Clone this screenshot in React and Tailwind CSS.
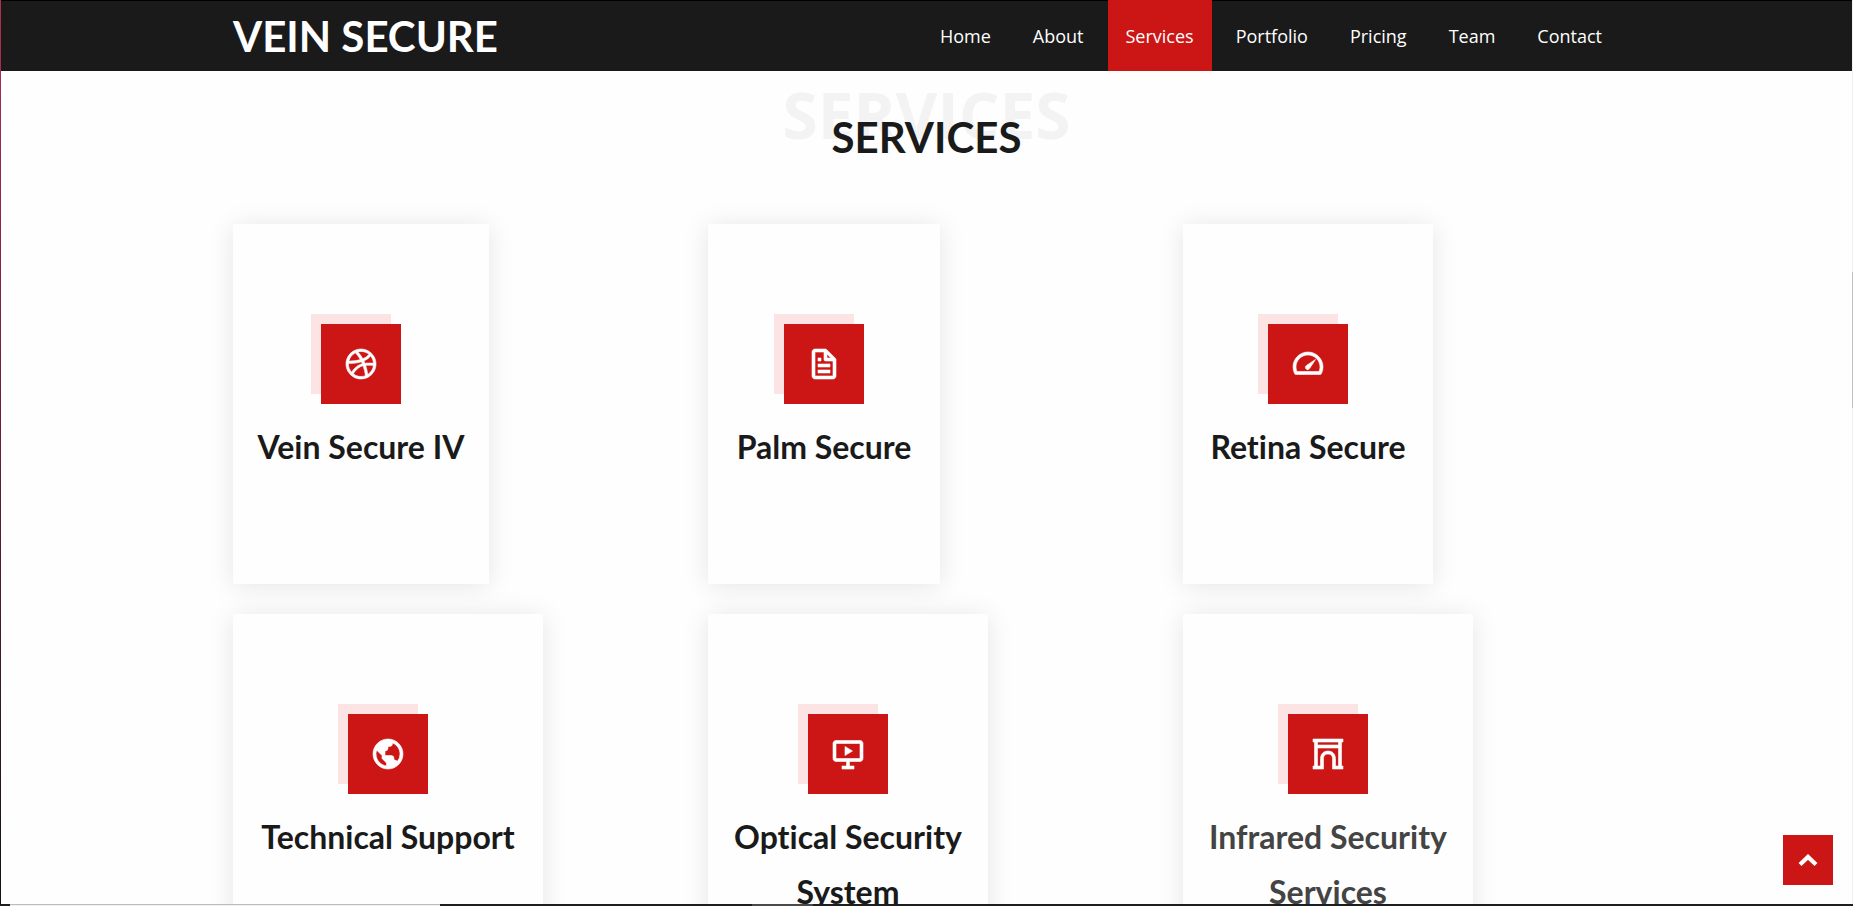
import {
  BiLogoDribbble,
  BiFile,
  BiTachometer,
  BiWorld,
  BiSlideshow,
  BiArch,
} from "react-icons/bi";

const links = ["Home", "About", "Services", "Portfolio", "Pricing", "Team", "Contact"];

const services = [
  { title: "Vein Secure IV", icon: BiLogoDribbble, width: "w-[256px]", color: "text-[#1a1a1a]" },
  { title: "Palm Secure", icon: BiFile, width: "w-[232px]", color: "text-[#1a1a1a]" },
  { title: "Retina Secure", icon: BiTachometer, width: "w-[250px]", color: "text-[#1a1a1a]" },
  { title: "Technical Support", icon: BiWorld, width: "w-[310px]", color: "text-[#1a1a1a]" },
  { title: "Optical Security System", icon: BiSlideshow, width: "w-[280px]", color: "text-[#1a1a1a]" },
  { title: "Infrared Security Services", icon: BiArch, width: "w-[290px]", color: "text-[#444444]" },
];

function Header() {
  return (
    <header className="sticky top-0 z-10 bg-[#1a1a1a] shadow-[inset_0_1px_0_#000]">
      <div className="mx-auto flex h-[71px] max-w-[1387px] items-center justify-between">
        <a href="#home" className="font-['Lato',sans-serif] text-[42px] font-bold leading-[70px] text-white">
          VEIN SECURE
        </a>
        <nav className="flex h-full gap-1.5" aria-label="Main">
          {links.map((name) => (
            <a
              key={name}
              href={"#" + name.toLowerCase()}
              aria-current={name === "Services" ? "page" : undefined}
              className={
                name === "Services"
                  ? "flex items-center bg-[#cc1616] px-[18px] text-lg text-white"
                  : "flex items-center px-[18px] text-lg text-white"
              }
            >
              {name}
            </a>
          ))}
        </nav>
      </div>
    </header>
  );
}

function ServiceCard({ title, icon: Icon, width, color }) {
  return (
    <article
      className={
        width +
        " flex min-h-[360px] flex-col items-center bg-[#fefefe] pb-[110px] pt-[100px] text-center shadow-[0_2px_25px_rgba(0,0,0,0.1)]"
      }
    >
      <div className="relative mb-[15px] size-20">
        <div className="absolute -left-2.5 -top-2.5 size-20 bg-[#fce4e4]" />
        <div className="relative flex size-20 items-center justify-center bg-[#cc1616] text-white">
          <Icon size={36} strokeWidth={0.4} aria-hidden="true" />
        </div>
      </div>
      <h3
        className={
          color +
          " px-4 font-['Lato',sans-serif] text-[32px] font-bold leading-[55px] [font-variant-ligatures:none]"
        }
      >
        <a href="#services">{title}</a>
      </h3>
    </article>
  );
}

export default function App() {
  return (
    <div className="relative h-screen overflow-hidden bg-[#fefefe] font-['Open_Sans',sans-serif]">
      <div className="h-full overflow-y-auto [scrollbar-width:none]">
        <Header />
        <main id="services" className="mx-auto max-w-[1387px] pb-10">
          <div className="relative flex h-[153px] justify-center pt-9">
            <span
              aria-hidden="true"
              className="absolute top-3 text-[64px] font-bold leading-[64px] text-[#f3f3f3]"
            >
              SERVICES
            </span>
            <h2 className="relative font-['Lato',sans-serif] text-[42px] font-bold leading-[60px] text-[#1a1a1a]">
              SERVICES
            </h2>
          </div>
          <div className="grid grid-cols-3 items-start gap-x-[38px] gap-y-[30px]">
            {services.map((s) => (
              <ServiceCard key={s.title} {...s} />
            ))}
          </div>
        </main>
      </div>

      <button
        type="button"
        aria-label="Back to top"
        className="absolute bottom-[21px] right-5 z-20 flex size-[50px] items-center justify-center bg-[#cc1616] text-white"
      >
        <svg width="20" height="14" viewBox="0 0 20 14" aria-hidden="true">
          <path d="M2 11.5 L10 4 L18 11.5" fill="none" stroke="currentColor" strokeWidth="4.2" />
        </svg>
      </button>

      <div className="absolute inset-y-0 left-0 z-20 w-px bg-linear-to-b from-[#b03050] via-[#6a1c38] to-[#101014]" />
      <div className="absolute inset-y-0 right-0 z-20 flex w-px flex-col">
        <div className="h-[30%] bg-[#f1f1f1]" />
        <div className="h-[15%] bg-[#c1c1c1]" />
        <div className="flex-1 bg-[#f1f1f1]" />
      </div>
      <div className="absolute inset-x-0 bottom-0 z-20 flex h-0.5 bg-[#1d1e22]">
        <div className="ml-2.5 w-[430px] border-t border-[#bdbdbd] bg-[#f1f1f1]" />
        <div className="ml-[312px] w-[61px] bg-[#4a4a4c]" />
      </div>
    </div>
  );
}
